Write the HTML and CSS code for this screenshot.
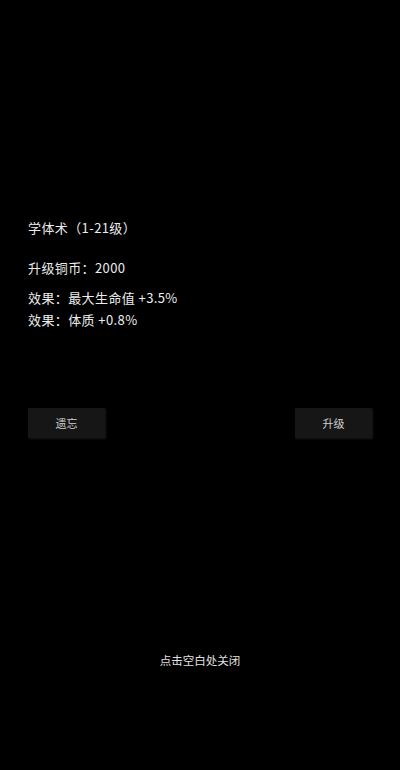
FILE: index.html
```html
<!DOCTYPE html>
<html lang="zh">
<head>
<meta charset="utf-8">
<link rel="stylesheet" href="styles.css">
</head>
<body>
<div class="panel">
  <div class="title">学体术（1-21级）</div>
  <div class="cost">升级铜币：2000</div>
  <div class="effects">
    <div class="effect">效果：最大生命值 +3.5%</div>
    <div class="effect">效果：体质 +0.8%</div>
  </div>
  <div class="actions">
    <div class="btn">遗忘</div>
    <div class="btn">升级</div>
  </div>
  <div class="hint">点击空白处关闭</div>
</div>
</body>
</html>
```
FILE: styles.css
```css
html, body {
  margin: 0;
  padding: 0;
  background: #000;
}
body {
  width: 400px;
  height: 770px;
  overflow: hidden;
  font-family: "Noto Sans CJK SC", "Noto Sans", sans-serif;
  color: #ececec;
}
.panel {
  display: flex;
  flex-direction: column;
  padding: 218px 28px 0 28px;
}
.title {
  font-size: 13px;
  line-height: 20px;
  letter-spacing: 0.4px;
}
.cost {
  font-size: 13px;
  line-height: 20px;
  margin-top: 20px;
  letter-spacing: 0.4px;
}
.effects {
  margin-top: 9px;
  display: flex;
  flex-direction: column;
}
.effect {
  font-size: 13px;
  line-height: 22px;
  letter-spacing: 0.4px;
}
.actions {
  margin-top: 77px;
  display: flex;
  justify-content: space-between;
}
.btn {
  width: 77px;
  height: 30px;
  background: #161616;
  box-shadow: 1px 1px 2px rgba(40,40,40,0.6);
  color: #cfcfcf;
  font-size: 11px;
  display: flex;
  align-items: center;
  justify-content: center;
}
.hint {
  margin-top: 212px;
  text-align: center;
  font-size: 11.5px;
  line-height: 20px;
  color: #e0e0e0;
}
```
